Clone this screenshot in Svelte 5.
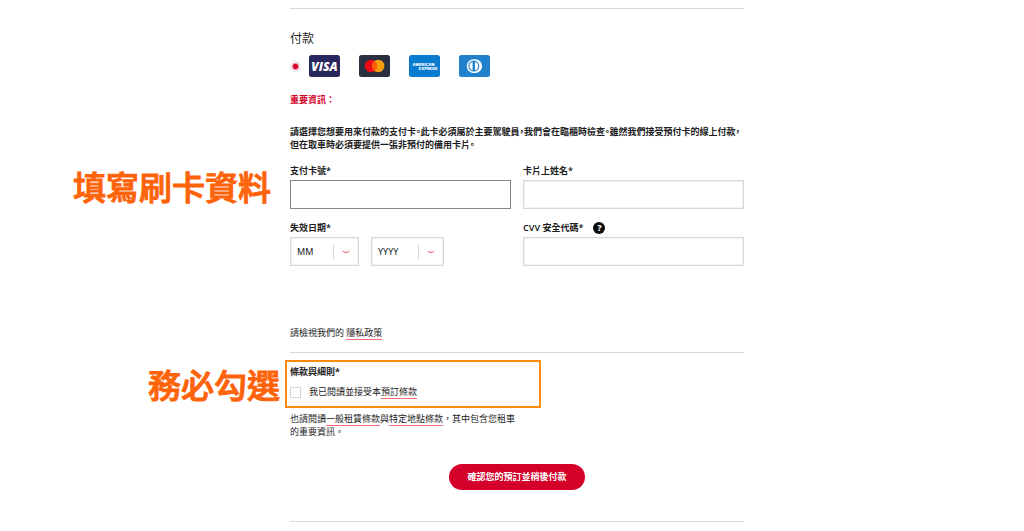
<script lang="ts">
  let cardNumber = $state('');
  let cardName = $state('');
  let cvv = $state('');
  let accepted = $state(false);
  const months = Array.from({ length: 12 }, (_, i) => String(i + 1).padStart(2, '0'));
  const years = Array.from({ length: 10 }, (_, i) => String(2024 + i));
</script>

{#snippet chevron()}
  <svg class="chevron" viewBox="0 0 8 4" aria-hidden="true">
    <path d="M0.8 1 Q2.4 2.8 4 2.4 Q5.6 2.8 7.2 1" fill="none" stroke="#ee4a5e" stroke-width="1" />
  </svg>
{/snippet}

<main>
  <section class="body intro">
    <hr />
    <h2>付款</h2>
    <label class="cards">
      <input type="radio" name="method" checked aria-label="Visa, Mastercard, American Express, Diners Club" />
      <svg viewBox="0 0 31 22" aria-hidden="true">
        <rect width="31" height="22" rx="2.5" fill="#28285f" />
        <text x="15.5" y="15.5" text-anchor="middle" class="visa">VISA</text>
      </svg>
      <svg viewBox="0 0 31 22" aria-hidden="true">
        <rect width="31" height="22" rx="2.5" fill="#2b3040" />
        <circle cx="12" cy="11" r="6.2" fill="#eb0a16" />
        <circle cx="19.2" cy="11" r="6.2" fill="#f99d10" />
        <path d="M15.6 5.95a6.2 6.2 0 0 1 0 10.1a6.2 6.2 0 0 1 0-10.1z" fill="#ff5a00" />
      </svg>
      <svg viewBox="0 0 31 22" aria-hidden="true">
        <rect width="31" height="22" rx="2.5" fill="#0a7cd0" />
        <text x="3.5" y="10.8" class="amex">AMERICAN</text>
        <text x="28.3" y="15" text-anchor="end" class="amex">EXPRESS</text>
      </svg>
      <svg viewBox="0 0 31 22" aria-hidden="true">
        <rect width="31" height="22" rx="2.5" fill="#1f80cc" />
        <path d="M14.6 4.2h1.6a6.9 6.9 0 0 1 0 13.8h-1.6a6.9 6.9 0 0 1 0-13.8z" fill="#fff" />
        <circle cx="14.8" cy="11.1" r="5.5" fill="#1f80cc" />
        <path d="M13.6 6.8a4.5 4.5 0 0 0 0 8.6zM16 6.8a4.5 4.5 0 0 1 0 8.6z" fill="#fff" />
      </svg>
    </label>
    <h3 class="alert">重要資訊：</h3>
    <p class="notice">
      請選擇您想要用來付款的支付卡。此卡必須屬於主要駕駛員，我們會在臨櫃時檢查。雖然我們接受預付卡的線上付款，但在取車時必須要提供一張非預付的備用卡片。
    </p>
  </section>

  <strong class="note">填寫刷卡資料</strong>
  <section class="body fields">
    <div class="field">
      <label for="number">支付卡號*</label>
      <input id="number" class="box active" type="text" bind:value={cardNumber} />
    </div>
    <div class="field">
      <label for="name">卡片上姓名*</label>
      <input id="name" class="box" type="text" bind:value={cardName} />
    </div>
    <div class="field">
      <label for="month">失效日期*</label>
      <div class="dates">
        <span class="select month">
          <select id="month" class="box">
            <option>MM</option>
            {#each months as m}<option>{m}</option>{/each}
          </select>
          {@render chevron()}
        </span>
        <span class="select year">
          <select class="box" aria-label="年份">
            <option>YYYY</option>
            {#each years as y}<option>{y}</option>{/each}
          </select>
          {@render chevron()}
        </span>
      </div>
    </div>
    <div class="field">
      <div class="caption">
        <label for="cvv">CVV 安全代碼*</label>
        <button class="help" type="button">?</button>
      </div>
      <input id="cvv" class="box" type="text" bind:value={cvv} />
    </div>
  </section>

  <section class="body privacy">
    <p>請檢視我們的 <a href="#privacy">隱私政策</a></p>
    <hr />
  </section>

  <strong class="note near">務必勾選</strong>
  <section class="body terms">
    <h3>條款與細則*</h3>
    <div class="accept">
      <input id="accept" type="checkbox" bind:checked={accepted} />
      <label for="accept">我已閱讀並接受本<a href="#booking">預訂條款</a></label>
    </div>
  </section>

  <section class="body closing">
    <p class="more">
      也請閱讀<a href="#rental">一般租賃條款</a>與<a href="#location">特定地點條款</a>，其中包含您租車的重要資訊。
    </p>
    <button class="confirm" type="button">確認您的預訂並稍後付款</button>
    <hr />
  </section>
</main>

<style>
  :global(body) {
    margin: 0;
    background: #fff;
  }
  main {
    display: grid;
    grid-template-columns: 290fr minmax(0, 454fr) 280fr;
    padding: 8px 0 9px;
    color: #1c1c1c;
    font: 9px/14px "Noto Sans", "Noto Sans CJK TC", sans-serif;
  }
  .body {
    grid-column: 2;
    min-width: 0;
  }
  h2,
  h3,
  p {
    margin: 0;
  }
  h3 {
    font-size: 9px;
    line-height: 14px;
  }
  hr {
    margin: 0;
    border: 0;
    border-top: 1px solid #d8d8d8;
  }
  a {
    display: inline-block;
    color: inherit;
    text-decoration: none;
    line-height: 13px;
    box-shadow: 0 1px 0 #ff6a78;
  }
  button,
  input,
  select {
    box-sizing: border-box;
    margin: 0;
    font: inherit;
    color: inherit;
  }
  .note {
    grid-column: 1;
    justify-self: end;
    margin-right: 19px;
    padding-top: 13px;
    color: #ff6309;
    font-size: 33px;
    font-weight: 500;
    line-height: 48px;
    white-space: nowrap;
    -webkit-text-stroke: 1px #ff6309;
  }
  .note.near {
    margin-right: 10px;
    line-height: 40px;
  }
  h2 {
    margin-top: 20px;
    font-size: 12px;
    font-weight: 400;
    line-height: 20px;
  }
  .cards {
    display: flex;
    align-items: center;
    gap: 19px;
    margin-top: 6px;
  }
  .cards svg {
    width: 31px;
    height: 22px;
  }
  .cards input {
    appearance: none;
    width: 11px;
    height: 11px;
    margin-right: -11px;
    border: 1px solid #dedede;
    border-radius: 50%;
    background: radial-gradient(circle, #d4002a 0 2px, #fff 4px);
  }
  .visa {
    fill: #fff;
    font: italic 800 12px "Open Sans", sans-serif;
  }
  .amex {
    fill: #fff;
    font: 800 4px "Inter", sans-serif;
  }
  .alert {
    margin-top: 16px;
    color: #d4002a;
  }
  .notice {
    margin-top: 18px;
    font-weight: 600;
    line-height: 13px;
    font-feature-settings: "halt";
  }
  .fields {
    display: grid;
    grid-template-columns: 1fr 1fr;
    gap: 12px;
    margin-top: 13px;
  }
  .field {
    display: grid;
    gap: 2px;
    font-weight: 600;
  }
  .box {
    width: 100%;
    height: 29px;
    padding: 0 6px;
    border: 1px solid #d8d8d8;
    border-radius: 0;
    background: #fff;
    font-weight: 400;
    box-shadow: inset 0 0 0 1px #f2f2f2;
  }
  .active {
    border-color: #858585;
    box-shadow: none;
  }
  .dates {
    display: flex;
    gap: 12px;
  }
  .select {
    position: relative;
  }
  .month {
    width: 69px;
  }
  .year {
    width: 73px;
  }
  select {
    display: block;
    appearance: none;
  }
  .select::after {
    content: "";
    position: absolute;
    top: 7px;
    right: 25px;
    height: 15px;
    border-left: 1px solid #d8d8d8;
  }
  .chevron {
    position: absolute;
    top: 13px;
    right: 9px;
    width: 8px;
    height: 4px;
    pointer-events: none;
  }
  .caption {
    display: flex;
    align-items: center;
    gap: 10px;
    height: 14px;
  }
  .help {
    width: 12px;
    height: 12px;
    padding: 0;
    border: 0;
    border-radius: 50%;
    background: #0c0c0c;
    color: #fff;
    font-weight: 800;
    line-height: 12px;
  }
  .privacy {
    margin-top: 60px;
  }
  .privacy hr {
    margin-top: 12px;
  }
  .terms {
    width: 256px;
    box-sizing: border-box;
    margin: 7px 0 0 -5px;
    padding: 3px 3px 7px;
    border: 2px solid #ff8a0c;
  }
  .accept {
    display: flex;
    align-items: center;
    gap: 8px;
    margin-top: 6px;
  }
  .accept input {
    width: 11px;
    height: 11px;
  }
  .accept input:not(:checked) {
    appearance: none;
    border: 1px solid #d4d4d4;
  }
  .more {
    width: 50%;
    margin-top: 4px;
    line-height: 13px;
  }
  .confirm {
    display: block;
    height: 26px;
    margin: 26px auto 31px;
    padding: 0 18px;
    border: 0;
    border-radius: 13px;
    background: #d4002a;
    color: #fff;
    font-weight: 700;
  }
</style>
